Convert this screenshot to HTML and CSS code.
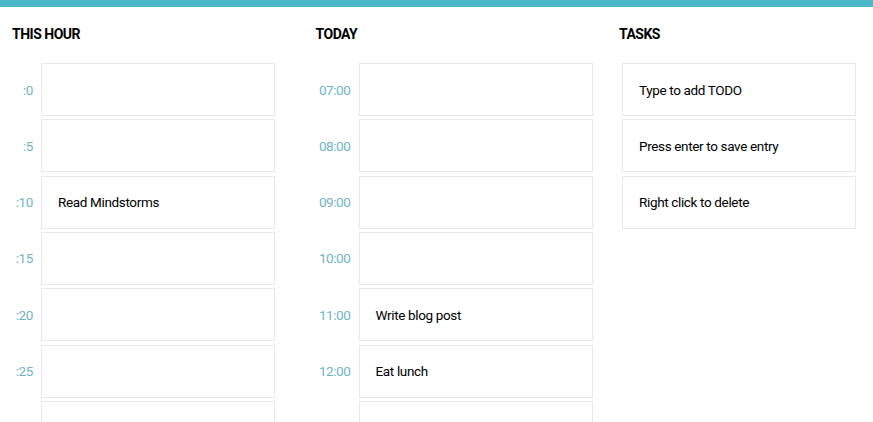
FILE: index.html
```html
<!DOCTYPE html>
<html>
<head>
<meta charset="utf-8">
<link rel="stylesheet" href="styles.css">
</head>
<body>
<div class="topbar"></div>
<main class="columns">
  <section class="col">
    <h2 class="col-title">THIS HOUR</h2>
    <div class="slots slots--minutes">
      <div class="label">:0</div><div class="box"></div>
      <div class="label">:5</div><div class="box"></div>
      <div class="label">:10</div><div class="box">Read Mindstorms</div>
      <div class="label">:15</div><div class="box"></div>
      <div class="label">:20</div><div class="box"></div>
      <div class="label">:25</div><div class="box"></div>
      <div class="label">:30</div><div class="box"></div>
    </div>
  </section>
  <section class="col">
    <h2 class="col-title">TODAY</h2>
    <div class="slots slots--hours">
      <div class="label">07:00</div><div class="box"></div>
      <div class="label">08:00</div><div class="box"></div>
      <div class="label">09:00</div><div class="box"></div>
      <div class="label">10:00</div><div class="box"></div>
      <div class="label">11:00</div><div class="box">Write blog post</div>
      <div class="label">12:00</div><div class="box">Eat lunch</div>
      <div class="label">13:00</div><div class="box"></div>
    </div>
  </section>
  <section class="col">
    <h2 class="col-title">TASKS</h2>
    <div class="tasks">
      <div class="box">Type to add TODO</div>
      <div class="box">Press enter to save entry</div>
      <div class="box">Right click to delete</div>
    </div>
  </section>
</main>
</body>
</html>
```
FILE: styles.css
```css
html, body {
  margin: 0;
  padding: 0;
  background: #fff;
  overflow: hidden;
}
body {
  font-family: Roboto, "Liberation Sans", sans-serif;
  color: #111;
  width: 873px;
  height: 422px;
}
.topbar {
  height: 7px;
  background: #4bb8c9;
}
.columns {
  display: flex;
  padding: 17px 0 0 12px;
}
.col {
  flex: 0 0 303.5px;
}
.col-title {
  margin: 0 0 19px 0;
  font-size: 14px;
  line-height: 20px;
  font-weight: 700;
  color: #000;
  letter-spacing: -0.5px;
}
.slots {
  display: grid;
  column-gap: 8px;
  row-gap: 3.34px;
  grid-auto-rows: 53px;
}
.slots--minutes {
  grid-template-columns: 21px 234px;
}
.slots--hours {
  grid-template-columns: 35px 234px;
}
.label {
  display: flex;
  align-items: center;
  justify-content: flex-end;
  color: #6fb4c9;
  font-size: 13.5px;
  letter-spacing: -0.4px;
}
.box {
  box-sizing: border-box;
  height: 53px;
  border: 1px solid #e9e9e9;
  display: flex;
  align-items: center;
  padding-left: 16px;
  font-size: 13.5px;
  letter-spacing: -0.35px;
  color: #000;
}
.tasks {
  display: flex;
  flex-direction: column;
  gap: 3.34px;
  padding-left: 3px;
}
.tasks .box {
  width: 234px;
}
```
